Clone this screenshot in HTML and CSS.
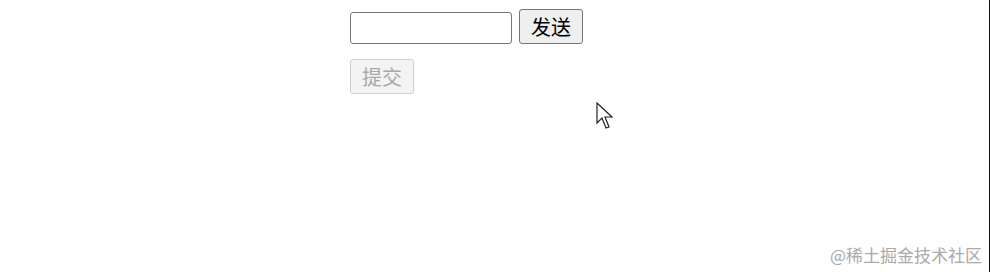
FILE: index.html
```html
<!DOCTYPE html>
<html lang="zh-CN">
<head>
    <meta charset="UTF-8">
    <meta name="viewport" content="width=device-width, initial-scale=1.0">
    <title>发送</title>
    <link rel="stylesheet" href="styles.css">
</head>
<body>
    <div class="page">
        <div class="form">
            <div class="row">
                <input class="msg" type="text">
                <button class="btn">发送</button>
            </div>
            <div class="row">
                <button class="btn" disabled>提交</button>
            </div>
        </div>
        <svg class="cursor" width="18" height="28" viewBox="0 0 18 28">
            <path d="M1 1 L1 21 L6 16 L10 26 L13 25 L9 15 L16 15 Z" fill="#fff" stroke="#222" stroke-width="1.2" stroke-linejoin="miter"/>
        </svg>
        <div class="mark">@稀土掘金技术社区</div>
    </div>
</body>
</html>
```

FILE: styles.css
```css
body {
    margin: 0;
    padding: 0;
    background-color: #fefefe;
    font-family: "Noto Sans CJK SC", "DejaVu Sans", sans-serif;
}
.page {
    position: relative;
    width: 989px;
    height: 272px;
    border-right: 1px solid #111;
}
.form {
    padding: 9px 0 0 350px;
    display: flex;
    flex-direction: column;
    gap: 15px;
}
.row {
    display: flex;
    align-items: center;
    gap: 7px;
}
.msg {
    width: 160px;
    height: 30px;
    margin: 2px 0 0 0;
    padding: 0;
    border: 1px solid #767676;
    border-radius: 3px;
    background: #fff;
}
.btn {
    height: 35px;
    padding: 0 11px;
    font-size: 20px;
    line-height: 1;
    font-family: "Noto Sans CJK SC", sans-serif;
    color: #000;
    background-color: #efefef;
    border: 1px solid #767676;
    border-radius: 3px;
}
.btn:disabled {
    color: #a8a8a8;
    background-color: #f3f3f3;
    border-color: #d0d0d0;
}
.cursor {
    position: absolute;
    left: 596px;
    top: 102px;
}
.mark {
    position: absolute;
    right: 7px;
    bottom: 5px;
    font-size: 17px;
    color: #aaa;
}
```
